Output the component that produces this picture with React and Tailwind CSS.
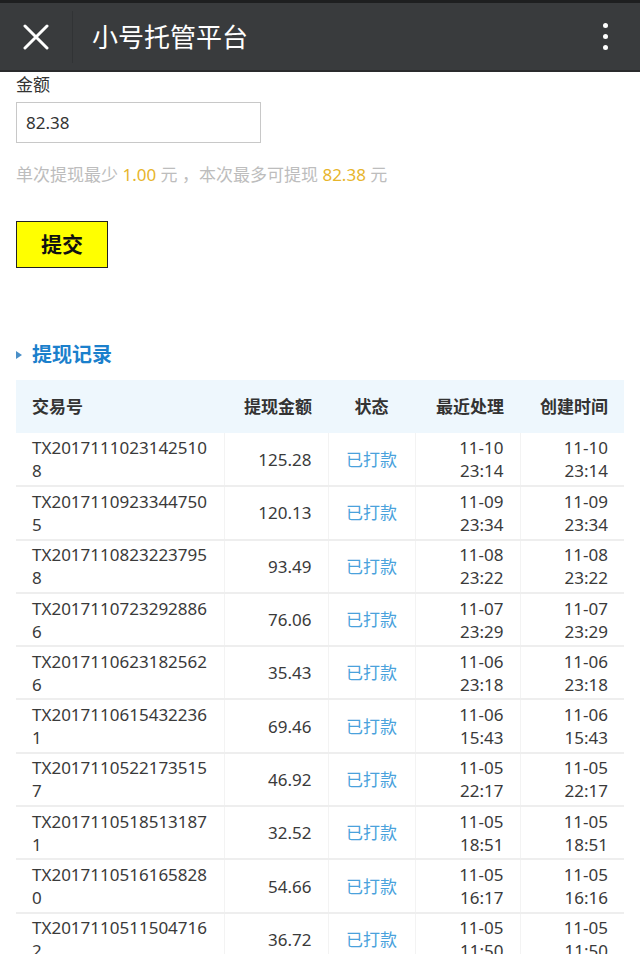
import React from 'react';

const records = [
  ['TX20171110231425108', '125.28', '11-10 23:14', '11-10 23:14'],
  ['TX20171109233447505', '120.13', '11-09 23:34', '11-09 23:34'],
  ['TX20171108232237958', '93.49', '11-08 23:22', '11-08 23:22'],
  ['TX20171107232928866', '76.06', '11-07 23:29', '11-07 23:29'],
  ['TX20171106231825626', '35.43', '11-06 23:18', '11-06 23:18'],
  ['TX20171106154322361', '69.46', '11-06 15:43', '11-06 15:43'],
  ['TX20171105221735157', '46.92', '11-05 22:17', '11-05 22:17'],
  ['TX20171105185131871', '32.52', '11-05 18:51', '11-05 18:51'],
  ['TX20171105161658280', '54.66', '11-05 16:17', '11-05 16:16'],
  ['TX20171105115047162', '36.72', '11-05 11:50', '11-05 11:50'],
];

const font = { fontFamily: '"Noto Sans", "Noto Sans CJK SC", sans-serif' };

const TimeCell = ({ value }) => {
  const [date, time] = value.split(' ');
  return (
    <td className="pr-[16px] text-right border-l border-[#f3f3f3]">
      <div>{date}</div>
      <div>{time}</div>
    </td>
  );
};

export default function App() {
  return (
    <div className="w-[640px] min-h-[954px] bg-white overflow-hidden" style={font}>
      {/* top bar */}
      <div className="h-[72px] bg-[#393b3d] border-t-[3px] border-[#1e1f20] border-b-[2px] border-b-[#2a2b2d] flex items-center">
        <div className="w-[72px] flex justify-center">
          <svg width="26" height="26" viewBox="0 0 26 26" stroke="white" strokeWidth="3" strokeLinecap="round">
            <path d="M2 2L24 24M24 2L2 24" />
          </svg>
        </div>
        <div className="w-[1px] h-[52px] bg-[#313335]" />
        <div className="ml-[19px] text-[26px] text-white leading-none flex-1">小号托管平台</div>
        <div className="w-[30px] mr-[20px] flex flex-col items-center gap-[6px]">
          <span className="w-[5px] h-[5px] rounded-full bg-white" />
          <span className="w-[5px] h-[5px] rounded-full bg-white" />
          <span className="w-[5px] h-[5px] rounded-full bg-white" />
        </div>
      </div>

      {/* form */}
      <div className="px-[16px]">
        <div className="text-[17px] leading-[24px] text-[#333] mt-[1px]">金额</div>
        <div className="mt-[5px] w-[245px] h-[41px] border border-[#c8c8c8] flex items-center pl-[9px] text-[17px] text-[#333]">
          82.38
        </div>
        <div className="mt-[21px] text-[17px] leading-[22px] text-[#bdbdbd]">
          单次提现最少 <span className="text-[#e7b52c]">1.00</span> 元 ，本次最多可提现{' '}
          <span className="text-[#e7b52c]">82.38</span> 元
        </div>
        <div className="mt-[35px] w-[92px] h-[47px] bg-[#ffff00] border-[1.5px] border-[#222] flex items-center justify-center text-[21px] font-bold text-[#111]">
          提交
        </div>

        {/* records */}
        <div className="mt-[72px] flex items-center h-[30px]">
          <svg width="6" height="8" viewBox="0 0 6 8" className="mr-[10px]">
            <path d="M0 0L6 4L0 8Z" fill="#4a8fc8" />
          </svg>
          <span className="text-[20px] font-bold text-[#1b80cc] leading-none">提现记录</span>
        </div>
        <table className="mt-[10px] w-[608px] table-fixed border-collapse text-[17px] text-[#3a3a3a]">
          <colgroup>
            <col className="w-[208px]" />
            <col className="w-[104px]" />
            <col className="w-[87px]" />
            <col className="w-[105px]" />
            <col className="w-[104px]" />
          </colgroup>
          <thead>
            <tr className="bg-[#eef7fd] h-[53px] text-[17px] font-bold text-[#333]">
              <th className="text-left pl-[16px]">交易号</th>
              <th className="text-right pr-[16px]">提现金额</th>
              <th className="text-center">状态</th>
              <th className="text-right pr-[16px]">最近处理</th>
              <th className="text-right pr-[16px]">创建时间</th>
            </tr>
          </thead>
          <tbody>
            {records.map((r) => (
              <tr key={r[0]} className="h-[53.3px] border-b-[2px] border-[#eeeeee] leading-[23px] align-middle">
                <td className="pl-[16px] pr-[16px] break-all">{r[0]}</td>
                <td className="pr-[16px] text-right border-l border-[#f3f3f3]">{r[1]}</td>
                <td className="text-center text-[#4aa2dc] border-l border-[#f3f3f3]">已打款</td>
                <TimeCell value={r[2]} />
                <TimeCell value={r[3]} />
              </tr>
            ))}
          </tbody>
        </table>
      </div>
    </div>
  );
}
